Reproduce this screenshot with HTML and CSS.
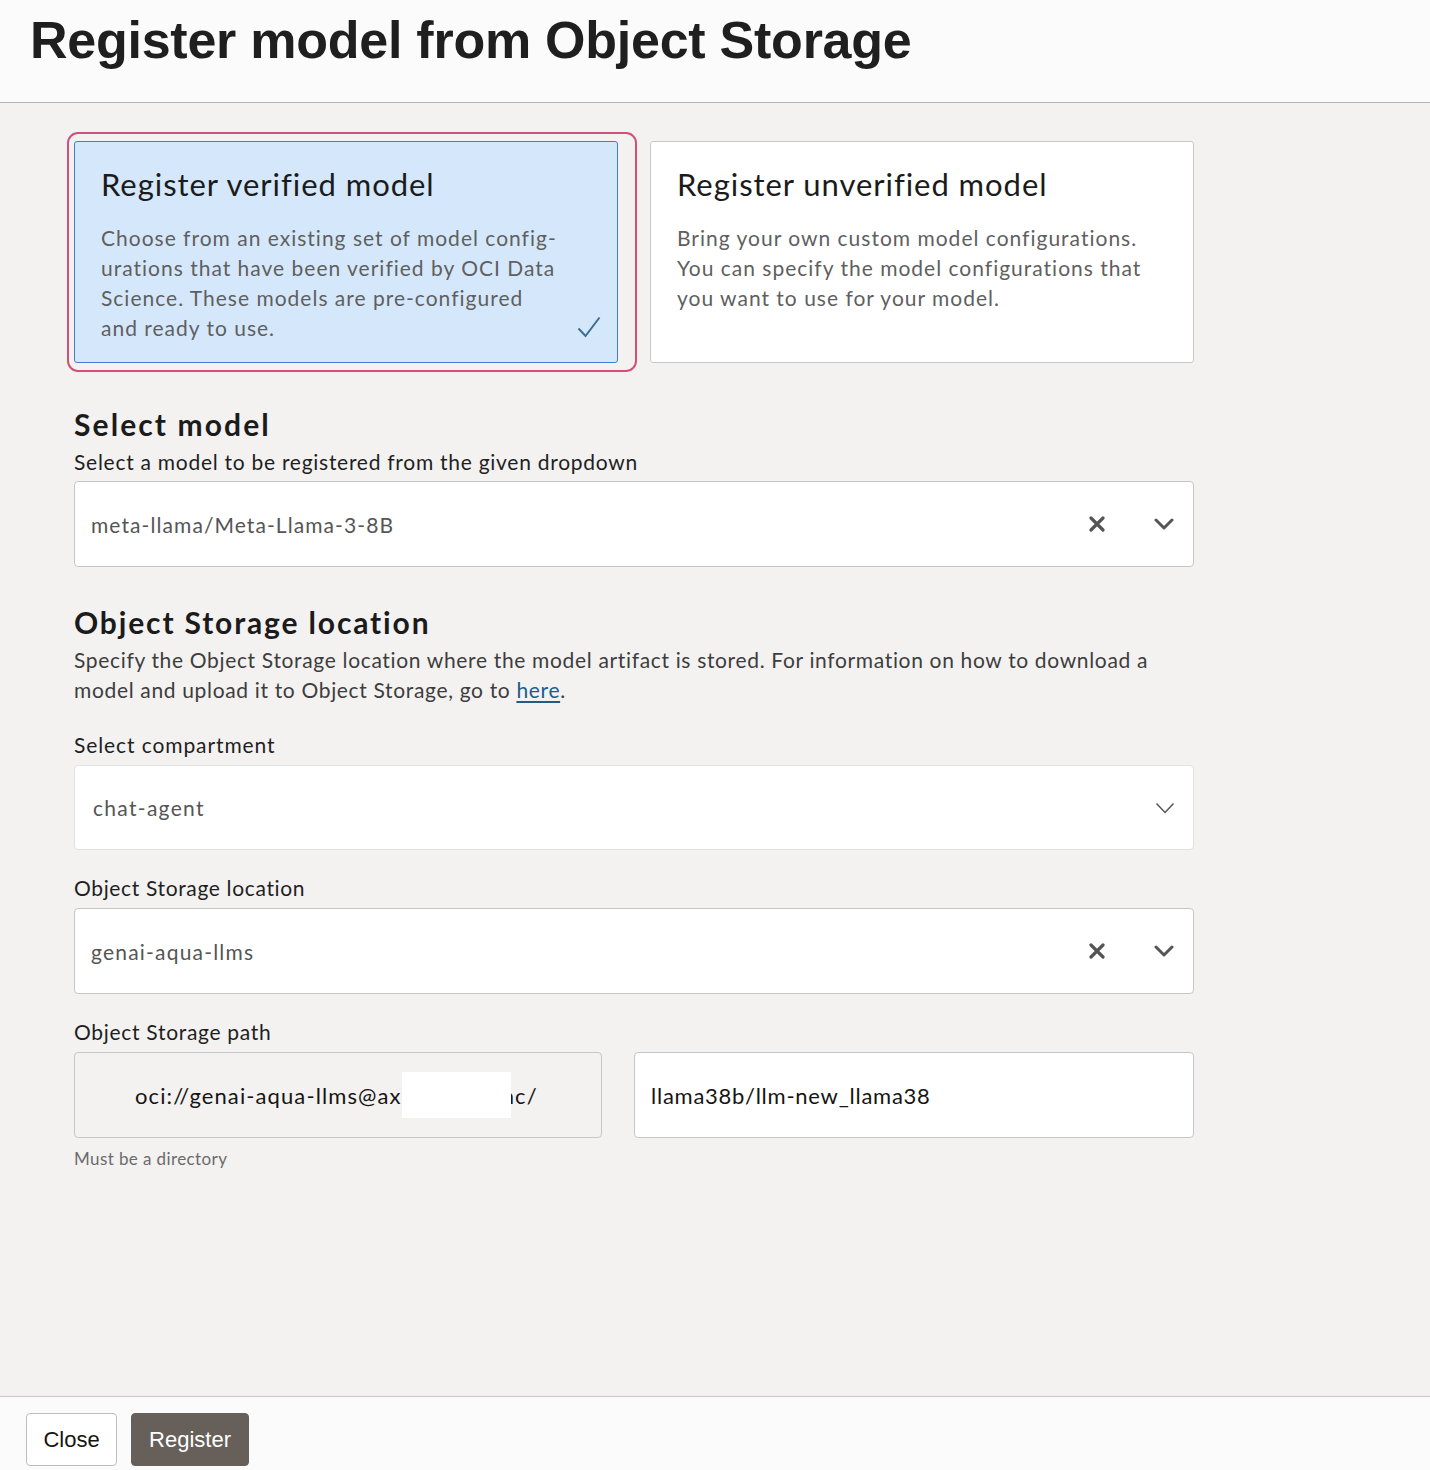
FILE: index.html
```html
<!DOCTYPE html>
<html lang="en">
<head>
<meta charset="utf-8">
<title>Register model from Object Storage</title>
<link rel="stylesheet" href="styles.css">
</head>
<body>
<div class="page">
  <header class="header">
    <h1 class="title">Register model from Object Storage</h1>
  </header>
  <main class="main">
    <div class="cards">
      <div class="card-cell">
        <div class="card card-selected">
          <div class="card-title">Register verified model</div>
          <div class="card-desc">Choose from an existing set of model config-<br>urations that have been verified by OCI Data<br>Science. These models are pre-configured<br>and ready to use.</div>
          <svg class="check" viewBox="0 0 24 22" width="24" height="22"><path d="M1.5 12.5 L8.5 20 L22.5 1.5" fill="none" stroke="#3a6f8f" stroke-width="2"/></svg>
        </div>
      </div>
      <div class="card">
        <div class="card-title">Register unverified model</div>
        <div class="card-desc">Bring your own custom model configurations.<br>You can specify the model configurations that<br>you want to use for your model.</div>
      </div>
    </div>

    <h2 class="section-title first">Select model</h2>
    <p class="section-sub">Select a model to be registered from the given dropdown</p>
    <div class="field select">
      <span class="value">meta-llama/Meta-Llama-3-8B</span>
      <svg class="icon-x" viewBox="0 0 16 16" width="16" height="16"><path d="M2 2 L14 14 M14 2 L2 14" stroke="#555" stroke-width="3.2" stroke-linecap="round"/></svg>
      <svg class="icon-chev" viewBox="0 0 20 12" width="20" height="12"><path d="M2 2 L10 10 L18 2" fill="none" stroke="#555" stroke-width="3" stroke-linecap="round" stroke-linejoin="round"/></svg>
    </div>

    <h2 class="section-title second">Object Storage location</h2>
    <p class="section-desc">Specify the Object Storage location where the model artifact is stored. For information on how to download a<br>model and upload it to Object Storage, go to <a href="#" class="link">here</a>.</p>

    <label class="label l1">Select compartment</label>
    <div class="field select light">
      <span class="value v2">chat-agent</span>
      <svg class="icon-chev thin" viewBox="0 0 20 12" width="20" height="12"><path d="M1.5 1.5 L10 10.5 L18.5 1.5" fill="none" stroke="#555" stroke-width="1.5"/></svg>
    </div>

    <label class="label l2">Object Storage location</label>
    <div class="field select">
      <span class="value v3">genai-aqua-llms</span>
      <svg class="icon-x" viewBox="0 0 16 16" width="16" height="16"><path d="M2 2 L14 14 M14 2 L2 14" stroke="#555" stroke-width="3.2" stroke-linecap="round"/></svg>
      <svg class="icon-chev" viewBox="0 0 20 12" width="20" height="12"><path d="M2 2 L10 10 L18 2" fill="none" stroke="#555" stroke-width="3" stroke-linecap="round" stroke-linejoin="round"/></svg>
    </div>

    <label class="label l3">Object Storage path</label>
    <div class="path-row">
      <div class="field path-prefix">
        <span class="prefix-text">oci://genai-aqua-llms@ax<span class="redact"></span>nc/</span>
      </div>
      <div class="field path-input">
        <span class="value dark">llama38b/llm-new_llama38</span>
      </div>
    </div>
    <div class="helper">Must be a directory</div>
  </main>
  <footer class="footer">
    <button class="btn btn-close">Close</button>
    <button class="btn btn-primary">Register</button>
  </footer>
</div>
</body>
</html>
```

FILE: styles.css
```css
* { box-sizing: border-box; }
html, body { margin: 0; padding: 0; }
body {
  font-family: Lato, "Noto Sans", sans-serif;
  color: #161513;
  background: #f3f2f1;
}
.page {
  height: 1470px;
  display: flex;
  flex-direction: column;
  overflow: hidden;
}
.header {
  height: 103px;
  background: #fbfbfb;
  border-bottom: 1px solid #b5b5b5;
  padding-left: 30px;
  display: flex;
  align-items: flex-start;
}
.title {
  margin: 11px 0 0 0;
  font-family: "Liberation Sans", Arial, sans-serif;
  font-weight: bold;
  font-size: 52px;
  line-height: 58px;
  color: #1f1f1f;
  letter-spacing: -0.25px;
}
.main {
  flex: 1;
  padding: 38px 0 0 74px;
  width: 1194px;
}
.cards {
  display: grid;
  grid-template-columns: 544px 544px;
  column-gap: 32px;
}
.card-cell { position: relative; }
.card {
  position: relative;
  height: 222px;
  background: #ffffff;
  border: 1px solid #c9c9c9;
  border-radius: 3px;
  padding: 23px 26px 0 26px;
}
.card-selected {
  background: #d5e8fb;
  border-color: #3f7ed1;
}
.card-selected::before {
  content: "";
  position: absolute;
  left: -8px;
  right: -20px;
  top: -10px;
  bottom: -10px;
  border: 2px solid #d2507a;
  border-radius: 11px;
}
.card-title {
  font-size: 31px;
  line-height: 38px;
  letter-spacing: 0.95px;
  color: #1b1b1b;
}
.card-desc {
  margin-top: 20px;
  font-size: 21px;
  line-height: 30px;
  letter-spacing: 1px;
  color: #5f5f5f;
}
.check {
  position: absolute;
  right: 16px;
  bottom: 24px;
}
.section-title {
  margin: 0;
  font-size: 30px;
  line-height: 36px;
  font-weight: bold;
  color: #1b1b1b;
}
.section-title.first { margin-top: 43px; letter-spacing: 2.1px; }
.section-title.second { margin-top: 37px; letter-spacing: 1.85px; }
.section-sub {
  margin: 7px 0 6px 0;
  font-size: 21px;
  line-height: 26px;
  letter-spacing: 0.73px;
  color: #1f1f1f;
}
.section-desc {
  margin: 5px 0 0 0;
  font-size: 21px;
  line-height: 30px;
  letter-spacing: 0.66px;
  color: #3d3d3d;
  white-space: nowrap;
}
.link {
  color: #1b5e8a;
  text-decoration: underline;
  text-decoration-thickness: 2px;
  text-underline-offset: 3px;
}
.label {
  display: block;
  font-size: 21px;
  line-height: 26px;
  margin: 25px 0 7px 0;
  color: #1f1f1f;
}
.label.l1 { margin-top: 27px; letter-spacing: 0.9px; }
.label.l2 { letter-spacing: 0.65px; }
.label.l3 { letter-spacing: 0.7px; }
.field {
  height: 86px;
  background: #ffffff;
  border: 1px solid #c6c6c6;
  border-radius: 4px;
  display: flex;
  align-items: center;
  padding-left: 16px;
}
.field.light {
  border-color: #e2e1df;
  height: 85px;
}
.value {
  font-size: 21px;
  letter-spacing: 1.08px;
  color: #555555;
  flex: 1;
}
.value.v2 { padding-left: 2px; letter-spacing: 1.3px; }
.value.v3 { letter-spacing: 1.2px; }
.value.dark { color: #161513; font-size: 22px; letter-spacing: 0.75px; }
.icon-x { margin-right: 49px; }
.icon-chev { margin-right: 19px; }
.icon-chev.thin { margin-right: 18px; }
.path-row {
  display: grid;
  grid-template-columns: 528px 560px;
  column-gap: 32px;
}
.path-prefix {
  background: #f3f2f1;
  border-color: #c3c7cc;
  padding-left: 60px;
}
.path-input { border-color: #c3c7cc; }
.prefix-text {
  font-size: 22px;
  letter-spacing: 1.1px;
  color: #161513;
  display: inline-flex;
  align-items: center;
}
.redact {
  display: inline-block;
  width: 109px;
  height: 46px;
  background: #ffffff;
  margin-right: -9px;
  position: relative;
  z-index: 1;
}
.helper {
  margin-top: 10px;
  font-size: 17px;
  line-height: 22px;
  letter-spacing: 0.4px;
  color: #6b6b6b;
}
.footer {
  height: 74px;
  background: #fbfbfb;
  border-top: 1px solid #c8c8c8;
  padding: 16px 0 0 26px;
  display: flex;
  align-items: flex-start;
  gap: 14px;
}
.btn {
  font-family: "Liberation Sans", Arial, sans-serif;
  font-size: 22px;
  height: 53px;
  border-radius: 4px;
  padding: 0 12px;
  cursor: pointer;
}
.btn-close {
  width: 91px;
  background: #ffffff;
  border: 1px solid #bdbdbd;
  color: #161513;
}
.btn-primary {
  width: 118px;
  background: #665f5a;
  border: 1px solid #665f5a;
  color: #ffffff;
}
```
